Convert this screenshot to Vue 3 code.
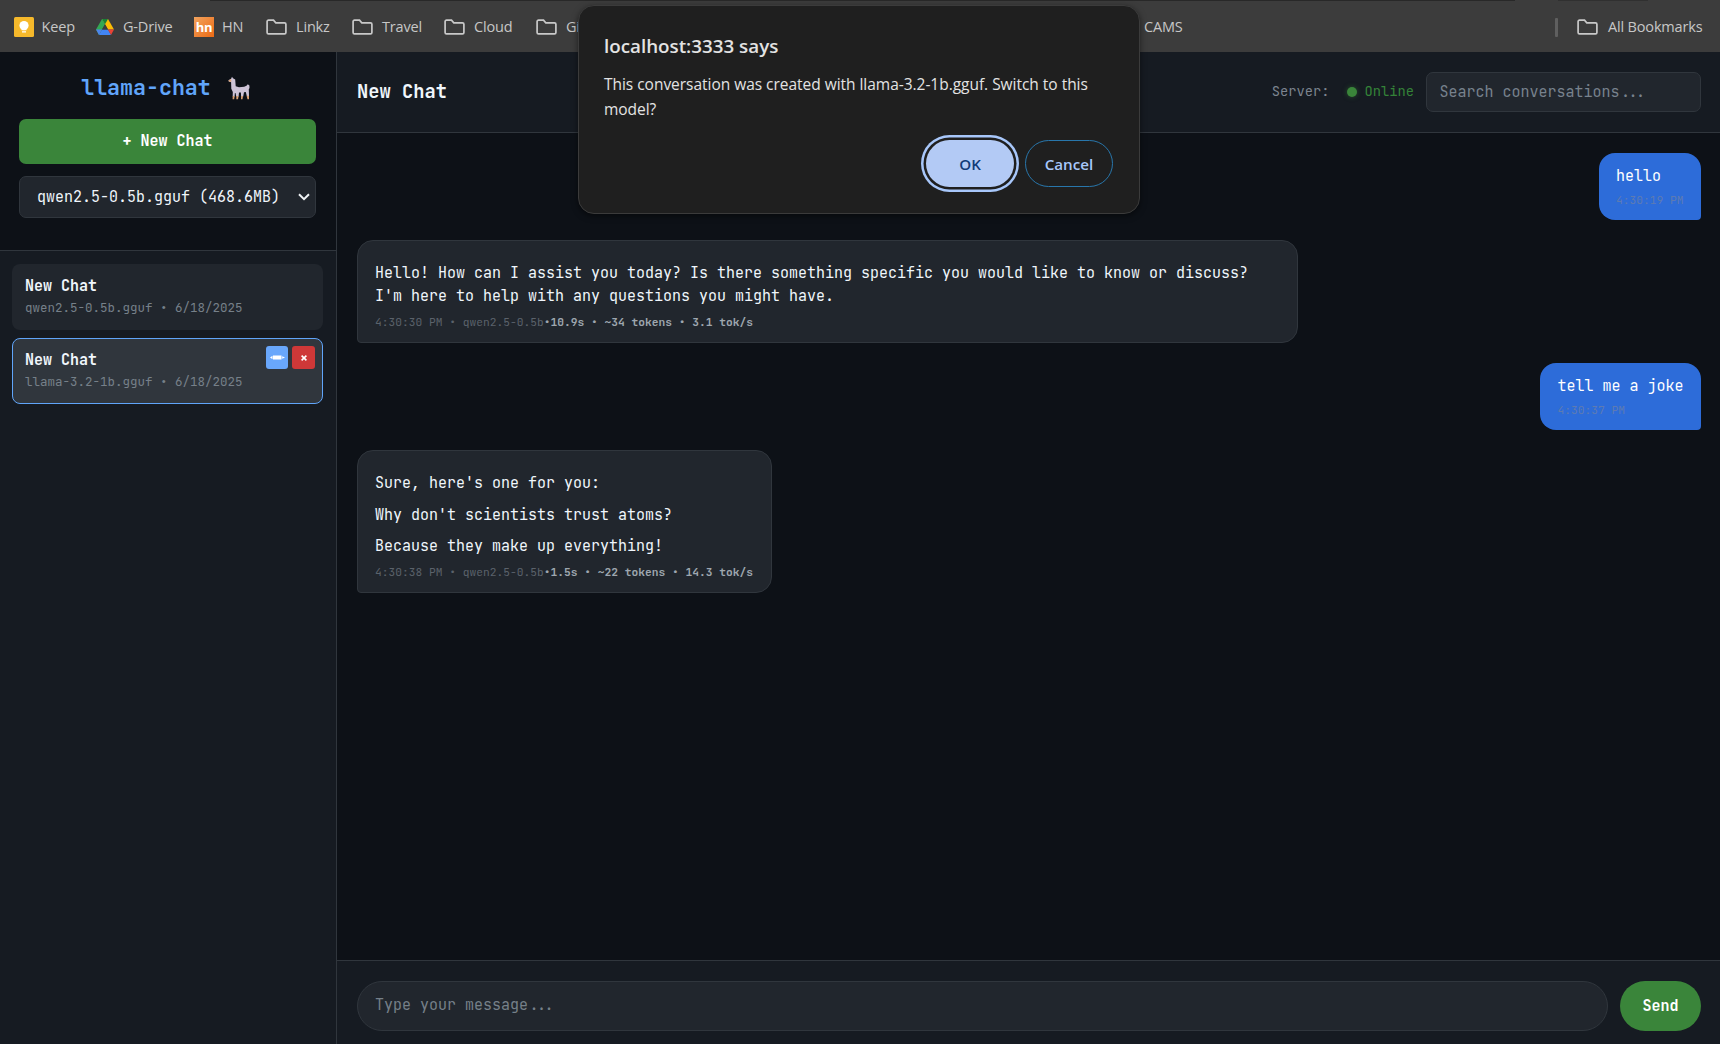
<script setup>
const bookmarks = [
  { label: 'Keep', icon: 'keep', width: 82, gap: 7.5 },
  { label: 'G-Drive', icon: 'drive', width: 98, gap: 9 },
  { label: 'HN', icon: 'hn', width: 72, gap: 8 },
  { label: 'Linkz', icon: 'folder', width: 86, gap: 9 },
  { label: 'Travel', icon: 'folder', width: 92, gap: 9 },
  { label: 'Cloud', icon: 'folder', width: 92, gap: 9 },
  { label: 'GitHub', icon: 'folder', width: 608, gap: 9 },
  { label: 'CAMS', icon: '', width: 60, gap: 0 },
]

const conversations = [
  { title: 'New Chat', meta: 'qwen2.5-0.5b.gguf • 6/18/2025', active: false },
  { title: 'New Chat', meta: 'llama-3.2-1b.gguf • 6/18/2025', active: true },
]

const messages = [
  { role: 'user', lines: ['hello'], time: '4:30:19 PM', stats: '' },
  {
    role: 'assistant',
    lines: [
      "Hello! How can I assist you today? Is there something specific you would like to know or discuss? I'm here to help with any questions you might have.",
    ],
    time: '4:30:30 PM • qwen2.5-0.5b',
    stats: '•10.9s • ~34 tokens • 3.1 tok/s',
  },
  { role: 'user', lines: ['tell me a joke'], time: '4:30:37 PM', stats: '' },
  {
    role: 'assistant',
    lines: ["Sure, here's one for you:", "Why don't scientists trust atoms?", 'Because they make up everything!'],
    time: '4:30:38 PM • qwen2.5-0.5b',
    stats: '•1.5s • ~22 tokens • 14.3 tok/s',
  },
]
</script>

<template>
  <div class="window">
    <nav class="bookmarks">
      <div v-for="b in bookmarks" :key="b.label" class="bookmark" :style="{ width: b.width + 'px', gap: b.gap + 'px' }">
        <svg v-if="b.icon === 'keep'" width="20" height="20" viewBox="0 0 20 20">
          <rect width="20" height="20" rx="1.5" fill="#f6b92b" />
          <circle cx="10" cy="8.600" r="4.600" fill="#fff" />
          <path d="M7.500 11h5v2.200h-5zM8 14.200h4v1.300H8z" fill="#fff" />
        </svg>
        <svg v-else-if="b.icon === 'drive'" width="18" height="16" viewBox="0 0 18 16">
          <path d="M6 0h6l6 10.400h-6z" fill="#fbbc04" />
          <path d="M6 0h6L9 5.200z" fill="#188038" />
          <path d="M6 0L9 5.200 6 10.400 3 16 0 10.400z" fill="#34a853" />
          <path d="M6 10.400h6L15 16H3z" fill="#4285f4" />
          <path d="M0 10.400h6L3 16z" fill="#4d84ec" />
          <path d="M12 10.400h6L15 16z" fill="#ea4335" />
          <path d="M9 5.200l3 5.200H6z" fill="#3c3c3c" />
        </svg>
        <span v-else-if="b.icon === 'hn'" class="hn">hn</span>
        <svg v-else-if="b.icon === 'folder'" width="21" height="16" viewBox="0 0 21 16">
          <path d="M2.500 1.200h5l2.300 2.600h8.700a1.400 1.400 0 0 1 1.400 1.400v8.200a1.400 1.400 0 0 1-1.400 1.400h-16a1.400 1.400 0 0 1-1.400-1.400V2.600a1.400 1.400 0 0 1 1.400-1.400z" fill="none" stroke="#c9c9c9" stroke-width="1.700" />
        </svg>
        <span class="bookmark-label">{{ b.label }}</span>
      </div>
      <div class="all-bookmarks">
        <i class="divider"></i>
        <svg width="21" height="16" viewBox="0 0 21 16">
          <path d="M2.500 1.200h5l2.300 2.600h8.700a1.400 1.400 0 0 1 1.400 1.400v8.200a1.400 1.400 0 0 1-1.400 1.400h-16a1.400 1.400 0 0 1-1.400-1.400V2.600a1.400 1.400 0 0 1 1.400-1.400z" fill="none" stroke="#c9c9c9" stroke-width="1.700" />
        </svg>
        <span class="bookmark-label">All Bookmarks</span>
      </div>
    </nav>

    <div class="app">
      <aside class="sidebar">
        <div class="sidebar-head">
          <h1 class="logo">
            <span>llama-chat</span>
            <svg width="22" height="24" viewBox="0 0 22 24">
              <path d="M4 .8l1 1.500L7.200 3.600 7.700 10.200l3.300 1 5.200-.4 2.300-1 1.300-1.500 1.600 1.300.1 2.500-.7 1.200.2 6.800h-2.200l-1-4-1.800.2-.8 4.300h-2.100l-.2-4.100H11l-.4 4.100H8.300l-.8-3.600-.6.1-.3 3.500H4.700l.1-4.700-1.500-3.200-.2-6.500L.8 5.400.5 4.300l2.600-1.600z" fill="#cdc3d6" />
              <path d="M3 3.100L.5 4.400l.4 1.200 2.500.2zM4.700 20h1.900l-.4 3.200H4.600zM8.400 20h2.200l-.6 3.200H8.300zM13.100 20h1.900l-.5 3.200h-1.500zM18.600 19.800H21v3.400h-1.500z" fill="#dba274" />
            </svg>
          </h1>
          <button class="new-chat">+ New Chat</button>
          <div class="model-select">
            <span>qwen2.5-0.5b.gguf (468.6MB)</span>
            <svg width="12" height="8" viewBox="0 0 12 8"><path d="M1 1.300l5 4.900 5-4.900" fill="none" stroke="#f0f3f6" stroke-width="2" /></svg>
          </div>
        </div>
        <div class="conversations">
          <div v-for="(c, i) in conversations" :key="i" class="conversation" :class="{ active: c.active }">
            <div class="conversation-text">
              <div class="conversation-title">{{ c.title }}</div>
              <div class="conversation-meta">{{ c.meta }}</div>
            </div>
            <div v-if="c.active" class="actions">
              <button class="action edit">
                <svg width="15" height="5" viewBox="0 0 15 5"><path d="M0 2.500L2.500.7V4.300zM3 .5h8.500v4H3zM12.200 1.200L15 2.500l-2.800 1.300z" fill="#fff" /></svg>
              </button>
              <button class="action remove">
                <svg width="6" height="6" viewBox="0 0 6 6"><path d="M.6.6l4.800 4.800M5.400.6L.6 5.400" stroke="#fff" stroke-width="1.600" /></svg>
              </button>
            </div>
          </div>
        </div>
      </aside>

      <main class="chat">
        <header class="chat-head">
          <h2>New Chat</h2>
          <div class="status">
            <span class="server">Server:</span>
            <i class="dot"></i>
            <span class="online">Online</span>
            <div class="search">Search conversations...</div>
          </div>
        </header>
        <section class="messages">
          <article v-for="(m, i) in messages" :key="i" class="message" :class="m.role">
            <p v-for="line in m.lines" :key="line">{{ line }}</p>
            <div class="message-meta"><span>{{ m.time }}</span><strong v-if="m.stats">{{ m.stats }}</strong></div>
          </article>
        </section>
        <footer class="composer">
          <div class="composer-input">Type your message...</div>
          <button class="send">Send</button>
        </footer>
      </main>
    </div>

    <div class="dialog">
      <div class="dialog-title">localhost:3333 says</div>
      <div class="dialog-text">
        <div>This conversation was created with llama-3.2-1b.gguf. Switch to this</div>
        <div>model?</div>
      </div>
      <div class="dialog-buttons">
        <button class="ok">OK</button>
        <button class="cancel">Cancel</button>
      </div>
    </div>
  </div>
</template>

<style>
body {
  margin: 0;
  overflow: hidden;
  background: #0d1117;
}
</style>

<style scoped>
* {
  box-sizing: border-box;
}
.window {
  position: relative;
  display: flex;
  flex-direction: column;
  width: 1720px;
  height: 1044px;
  font-family: "JetBrains Mono", "DejaVu Sans Mono", "Liberation Mono", monospace;
  font-size: 15px;
  color: #f0f6fc;
}
button {
  border: 0;
  padding: 0;
  font: inherit;
  letter-spacing: inherit;
  color: #fff;
}
svg {
  display: block;
  flex: none;
}

.bookmarks {
  display: flex;
  flex: none;
  align-items: center;
  height: 52px;
  padding: 2px 18px 0 14px;
  background: linear-gradient(90deg, transparent 210px, #282828 210px 1515px, transparent 1515px 1558px, #303030 1558px 1648px, transparent 1648px) 0 0 / 100% 1px no-repeat #3c3c3c;
  font-family: "Segoe UI", "Open Sans", sans-serif;
  font-size: 14.500px;
  letter-spacing: -0.17px;
  color: #c7c7c7;
}
.bookmark {
  display: flex;
  flex: none;
  align-items: center;
  white-space: nowrap;
}
.bookmark-label {
  line-height: 20px;
}
.hn {
  width: 20px;
  height: 20px;
  background: linear-gradient(135deg, #f2a35e, #ec6a14);
  color: #fff;
  font: bold 13px/21px "Open Sans", sans-serif;
  letter-spacing: -0.3px;
  text-align: center;
}
.all-bookmarks {
  display: flex;
  align-items: center;
  margin-left: auto;
  white-space: nowrap;
}
.all-bookmarks .bookmark-label {
  width: 94px;
  margin-left: 10px;
}
.divider {
  width: 3px;
  height: 19px;
  margin-right: 19px;
  border-radius: 1px;
  background: #5f5f5f;
}

.app {
  display: flex;
  flex: 1;
  min-height: 0;
}
.sidebar {
  display: flex;
  flex: none;
  flex-direction: column;
  width: 337px;
  border-right: 1px solid #30363d;
  background: #161b22;
}
.sidebar-head {
  display: flex;
  flex: none;
  flex-direction: column;
  height: 199px;
  padding: 20px 20px 0 19px;
  border-bottom: 1px solid #30363d;
  background: #0d1117;
}
.logo {
  display: flex;
  justify-content: center;
  align-items: center;
  gap: 17px;
  height: 29px;
  margin: 0 0 18px;
  padding-right: 4px;
  color: #60a5fa;
  font-size: 21.600px;
  font-weight: 600;
}
.logo svg {
  margin-top: 2px;
}
.new-chat {
  height: 45px;
  padding-bottom: 2px;
  border-radius: 7px;
  background: #3a853a;
  font-weight: 600;
}
.model-select {
  display: flex;
  justify-content: space-between;
  align-items: center;
  height: 42px;
  margin-top: 12px;
  padding: 0 5px 0 17px;
  border: 1px solid #30363d;
  border-radius: 7px;
  background: #21262d;
}
.conversations {
  display: flex;
  flex-direction: column;
  gap: 8px;
  padding: 13px 13px 0 12px;
}
.conversation {
  display: flex;
  justify-content: space-between;
  height: 66px;
  padding: 11px 7px 0 12px;
  border: 1px solid transparent;
  border-radius: 8px;
  background: #21262d;
}
.conversation.active {
  border-color: #60a5fa;
  background: #30363d;
}
.conversation-title {
  font-weight: 600;
  line-height: 20px;
}
.conversation-meta {
  margin-top: 2px;
  color: #768089;
  font-size: 12.500px;
  line-height: 20px;
}
.actions {
  display: flex;
  gap: 4px;
  margin-top: -4px;
}
.action {
  display: flex;
  align-items: center;
  justify-content: center;
  width: 22px;
  height: 23px;
  border-radius: 3px;
}
.edit {
  background: #69a7fb;
}
.remove {
  width: 23px;
  background: #ce3838;
}

.chat {
  display: flex;
  flex: 1;
  flex-direction: column;
  min-width: 0;
}
.chat-head {
  display: flex;
  flex: none;
  justify-content: space-between;
  align-items: center;
  height: 81px;
  padding: 0 19px 0 20px;
  border-bottom: 1px solid #30363d;
  background: #161b22;
}
h2 {
  margin: 0;
  padding-bottom: 2px;
  font-size: 18.750px;
  font-weight: 600;
}
.status {
  display: flex;
  align-items: center;
  font-size: 13.750px;
}
.server,
.online {
  padding-bottom: 2px;
}
.server {
  color: #7d8590;
}
.dot {
  width: 10px;
  height: 10px;
  margin: 0 7px 0 18px;
  border-radius: 50%;
  background: #3a853a;
  box-shadow: 0 0 5px rgba(58, 133, 58, 0.5);
}
.online {
  color: #348338;
}
.search {
  display: flex;
  align-items: center;
  width: 275px;
  height: 40px;
  margin-left: 12px;
  padding-left: 12.500px;
  border: 1px solid #30363d;
  border-radius: 7px;
  background: #21262d;
  color: #78828d;
  font-size: 15px;
}
.messages {
  display: flex;
  flex: 1;
  flex-direction: column;
  align-items: flex-start;
  gap: 20px;
  padding: 20px 19px 0 20px;
  background: #0d1117;
}
.message {
  border-radius: 16px;
}
.message p {
  margin: 0;
  line-height: 23px;
}
.user {
  align-self: flex-end;
  height: 67px;
  padding: 12px 17.500px 0 17px;
  border-bottom-right-radius: 4px;
  background: #2d6cd9;
  color: #fff;
}
.assistant {
  max-width: 941px;
  padding: 21px 18px 11px 17px;
  border: 1px solid #30363d;
  border-bottom-left-radius: 4px;
  background: #21262d;
}
.assistant p + p {
  margin-top: 8.500px;
}
.message-meta {
  margin-top: 5px;
  color: #5b626b;
  font-size: 11.250px;
  line-height: 18px;
}
.user .message-meta {
  margin-top: 3px;
  color: #5d7bb3;
}
.message-meta strong {
  color: #9ea6af;
  font-weight: 700;
}
.composer {
  display: flex;
  flex: none;
  gap: 12px;
  height: 84px;
  padding: 20px 19px 0 20px;
  border-top: 1px solid #30363d;
  background: #161b22;
}
.composer-input {
  display: flex;
  flex: 1;
  align-items: center;
  height: 50px;
  padding: 0 17px 2px;
  border: 1px solid #30363d;
  border-radius: 25px;
  background: #21262d;
  color: #768089;
}
.send {
  width: 81px;
  height: 50px;
  border-radius: 25px;
  background: #3a853a;
  font-weight: 600;
}

.dialog {
  position: absolute;
  top: 5px;
  left: 578px;
  display: flex;
  flex-direction: column;
  width: 562px;
  height: 209px;
  padding: 26px 26px 0 25px;
  border: 1px solid #3b3b3b;
  border-radius: 16px;
  background: #1f1f1f;
  box-shadow: 0 2px 6px rgba(0, 0, 0, 0.5);
  color: #e3e3e3;
  font-family: "Segoe UI", "Open Sans", sans-serif;
}
.dialog-title {
  font-size: 18.800px;
  font-weight: 600;
  line-height: 28px;
  white-space: nowrap;
}
.dialog-text {
  margin-top: 12px;
  font-size: 15.500px;
  letter-spacing: -0.03px;
  line-height: 25px;
  white-space: nowrap;
}
.dialog-buttons {
  display: flex;
  justify-content: flex-end;
  gap: 11px;
  margin-top: 18px;
}
.dialog-buttons button {
  width: 88px;
  height: 47px;
  border-radius: 24px;
  font-size: 15.200px;
  font-weight: 600;
}
.ok {
  background: #b3caf5;
  box-shadow: 0 0 0 2.500px #1f1f1f, 0 0 0 5px #a8c7fa;
  color: #123a78;
}
.dialog-buttons .cancel {
  border: 1px solid #2876ab;
  background: transparent;
  color: #a8c7fa;
}
</style>
